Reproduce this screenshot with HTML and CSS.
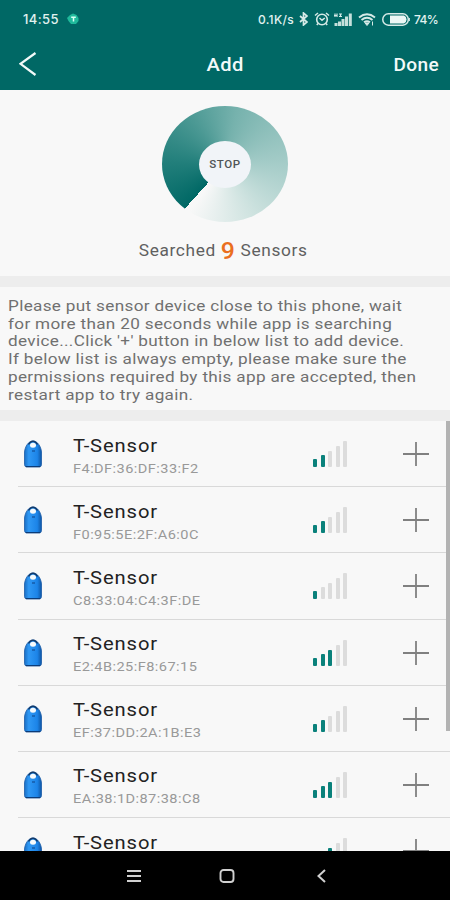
FILE: index.html
```html
<!DOCTYPE html>
<html lang="en">
<head>
    <meta charset="UTF-8">
    <meta name="viewport" content="width=device-width, initial-scale=1.0">
    <title>Add</title>
    <link rel="stylesheet" href="styles.css">
</head>
<body>
    <!-- Shared icons -->
    <svg class="icon-defs" aria-hidden="true">
        <defs>
            <linearGradient id="tag-fill" x1="0" y1="0" x2="1" y2="0">
                <stop offset="0" stop-color="#1a6fc4"/>
                <stop offset="0.25" stop-color="#2f98f4"/>
                <stop offset="0.75" stop-color="#1c84e8"/>
                <stop offset="1" stop-color="#0f56a4"/>
            </linearGradient>
            <symbol id="icon-tag" viewBox="0 0 20 28">
                <path d="M1.500 24.500V12C2 6.500 5.500 1 10 1S18 6.500 18.500 12V24.500Q18.500 26.800 16.500 26.800H3.500Q1.500 26.800 1.500 24.500Z" fill="url(#tag-fill)" stroke="#1a5ca8" stroke-width="0.800"/>
                <path d="M5.500 4.500Q7.500 1.200 10 1.200T14.500 4.500" fill="none" stroke="#143a68" stroke-width="1.400"/>
                <path d="M2.800 26.600H17.200" stroke="#0c3c78" stroke-width="1.200"/>
                <ellipse cx="10" cy="5.200" rx="3" ry="2.500" fill="#f6fafc"/>
                <path d="M9 11H12" stroke="#14529c" stroke-width="1.300"/>
            </symbol>
            <symbol id="icon-plus" viewBox="0 0 26 24">
                <path d="M0 12H26M13 0V24" stroke="#808080" stroke-width="1.800"/>
            </symbol>
        </defs>
    </svg>

    <div class="status-bar">
        <span class="status-time">14:55</span>
        <svg class="status-app" viewBox="0 0 14 12">
            <path d="M1 5L4 2 7 0.500 10.500 2 12.500 5V8L10 11H5L2.500 8Z" fill="#1fb99b"/>
            <path d="M5.200 4.300H9.800M7.500 4.300V8.500" stroke="#d9fff5" stroke-width="1.500"/>
        </svg>
        <span class="status-speed">0.1K/s</span>
        <svg class="status-bluetooth" viewBox="0 0 9 14">
            <path d="M1 4L8 10 4.500 13V1L8 4 1 10" fill="none" stroke="#d5eae7" stroke-width="1.700"/>
        </svg>
        <svg class="status-alarm" viewBox="0 0 16 14">
            <circle cx="8" cy="7.500" r="5.300" fill="none" stroke="#d5eae7" stroke-width="1.600"/>
            <path d="M1 3.500L4 1M15 3.500L12 1M5.500 6L8 8.200 10.800 6M4 11.500L2.800 13M12 11.500L13.200 13" fill="none" stroke="#d5eae7" stroke-width="1.500"/>
        </svg>
        <svg class="status-signal" viewBox="0 0 18 13">
            <path d="M1 0.500V4M0 2.500H3M3 0.500V4M5 1H8M5 3.500H8M6.500 1V4" fill="none" stroke="#d5eae7" stroke-width="1.200"/>
            <path d="M2 13V10M5.500 13V8.500M9 13V6M12.500 13V3.500M16.300 13V0.500" stroke="#c5e0dc" stroke-width="3"/>
        </svg>
        <svg class="status-wifi" viewBox="0 0 18 13">
            <path d="M1 4.500Q9 -2 17 4.500M3.500 7Q9 2.500 14.500 7M6 9.300Q9 7 12 9.300" fill="none" stroke="#d5eae7" stroke-width="1.900"/>
            <path d="M7 10H11L9 12.500ZM14.500 8.500V12.500" fill="#d5eae7" stroke="#d5eae7" stroke-width="1"/>
        </svg>
        <svg class="status-battery" viewBox="0 0 28 13">
            <rect x="0.800" y="0.800" width="25.500" height="11.400" rx="5.500" fill="none" stroke="#d5eae7" stroke-width="1.500"/>
            <path d="M8 2.500H22Q24.500 3.500 24.500 6.500T22 10.500H8Z" fill="#ecf7f5"/>
            <path d="M27.300 5V8" stroke="#d5eae7" stroke-width="1.200"/>
        </svg>
        <span class="status-percent">74%</span>
    </div>

    <div class="header">
        <svg class="back-btn" viewBox="0 0 18 24">
            <path d="M16.500 1L1.500 11.800 16.500 23" fill="none" stroke="#f2faf9" stroke-width="2.200"/>
        </svg>
        <h1>Add</h1>
        <span class="done-btn">Done</span>
    </div>

    <div class="search-panel">
        <div class="radar">
            <div class="stop-btn"><span>STOP</span></div>
        </div>
        <p class="search-result">Searched <span class="count">9</span> Sensors</p>
    </div>

    <div class="hint">
        <p>Please put sensor device close to this phone, wait<br>
        for more than 20 seconds while app is searching<br>
        device...Click '+' button in below list to add device.<br>
        If below list is always empty, please make sure the<br>
        permissions required by this app are accepted, then<br>
        restart app to try again.</p>
    </div>

    <div class="sensor-list">
        <div class="sensor">
            <svg class="tag"><use href="#icon-tag"/></svg>
            <div class="sensor-info"><h3>T-Sensor</h3><p>F4:DF:36:DF:33:F2</p></div>
            <div class="signal level-2"><i></i><i></i><i></i><i></i><i></i></div>
            <svg class="plus"><use href="#icon-plus"/></svg>
        </div>
        <div class="sensor">
            <svg class="tag"><use href="#icon-tag"/></svg>
            <div class="sensor-info"><h3>T-Sensor</h3><p>F0:95:5E:2F:A6:0C</p></div>
            <div class="signal level-2"><i></i><i></i><i></i><i></i><i></i></div>
            <svg class="plus"><use href="#icon-plus"/></svg>
        </div>
        <div class="sensor">
            <svg class="tag"><use href="#icon-tag"/></svg>
            <div class="sensor-info"><h3>T-Sensor</h3><p>C8:33:04:C4:3F:DE</p></div>
            <div class="signal level-1"><i></i><i></i><i></i><i></i><i></i></div>
            <svg class="plus"><use href="#icon-plus"/></svg>
        </div>
        <div class="sensor">
            <svg class="tag"><use href="#icon-tag"/></svg>
            <div class="sensor-info"><h3>T-Sensor</h3><p>E2:4B:25:F8:67:15</p></div>
            <div class="signal level-3"><i></i><i></i><i></i><i></i><i></i></div>
            <svg class="plus"><use href="#icon-plus"/></svg>
        </div>
        <div class="sensor">
            <svg class="tag"><use href="#icon-tag"/></svg>
            <div class="sensor-info"><h3>T-Sensor</h3><p>EF:37:DD:2A:1B:E3</p></div>
            <div class="signal level-2"><i></i><i></i><i></i><i></i><i></i></div>
            <svg class="plus"><use href="#icon-plus"/></svg>
        </div>
        <div class="sensor">
            <svg class="tag"><use href="#icon-tag"/></svg>
            <div class="sensor-info"><h3>T-Sensor</h3><p>EA:38:1D:87:38:C8</p></div>
            <div class="signal level-3"><i></i><i></i><i></i><i></i><i></i></div>
            <svg class="plus"><use href="#icon-plus"/></svg>
        </div>
        <div class="sensor">
            <svg class="tag"><use href="#icon-tag"/></svg>
            <div class="sensor-info"><h3>T-Sensor</h3></div>
            <div class="signal level-3"><i></i><i></i><i></i><i></i><i></i></div>
            <svg class="plus"><use href="#icon-plus"/></svg>
        </div>
        <div class="scrollbar"></div>
    </div>

    <div class="nav-bar">
        <svg class="nav-menu" viewBox="0 0 14 14">
            <path d="M0 2H14M0 7H14M0 12H14" stroke="#d0d0d0" stroke-width="2"/>
        </svg>
        <svg class="nav-home" viewBox="0 0 16 14">
            <rect x="1.500" y="1" width="13" height="12" rx="3" fill="none" stroke="#d0d0d0" stroke-width="1.900"/>
        </svg>
        <svg class="nav-back" viewBox="0 0 9 14">
            <path d="M8 1L1.500 7 8 13" fill="none" stroke="#d0d0d0" stroke-width="2"/>
        </svg>
    </div>
</body>
</html>
```
FILE: styles.css
```css
/* Reset CSS */
* {
    margin: 0;
    padding: 0;
    box-sizing: border-box;
}

body {
    width: 450px;
    height: 900px;
    display: flex;
    flex-direction: column;
    overflow: hidden;
    background: #f8f8f8;
    font-family: Roboto, "Liberation Sans", sans-serif;
}

svg {
    display: block;
    flex-shrink: 0;
}

.icon-defs {
    position: absolute;
    width: 0;
    height: 0;
}

/* Status bar */
.status-bar {
    height: 38px;
    flex-shrink: 0;
    display: flex;
    align-items: center;
    padding: 0 0 0 23px;
    background: #006865;
    color: #e0f2f0;
    font-family: Inter, sans-serif;
    font-size: 12px;
    font-weight: 500;
    white-space: nowrap;
}

.status-time {
    width: 36px;
    font-size: 13px;
    letter-spacing: 0.4px;
}

.status-app {
    width: 14px;
    height: 12px;
    margin-left: 7px;
}

.status-speed {
    width: 38px;
    margin-left: 178px;
    letter-spacing: 0.3px;
}

.status-bluetooth {
    width: 9px;
    height: 14px;
    margin-left: 3px;
}

.status-alarm {
    width: 16px;
    height: 14px;
    margin-left: 6px;
}

.status-signal {
    width: 18px;
    height: 13px;
    margin-left: 4px;
}

.status-wifi {
    width: 18px;
    height: 13px;
    margin-left: 6px;
}

.status-battery {
    width: 28px;
    height: 13px;
    margin-left: 6px;
}

.status-percent {
    margin-left: 4px;
    letter-spacing: -0.7px;
}

/* Header */
.header {
    height: 52px;
    flex-shrink: 0;
    display: grid;
    grid-template-columns: 1fr auto 1fr;
    align-items: center;
    padding: 0 11px 0 19px;
    background: #006865;
    color: #f2faf9;
}

.header h1,
.done-btn {
    font-size: 18px;
    font-weight: 500;
    letter-spacing: 0.4px;
}

.header h1 {
    transform: translateX(-3.500px) scaleX(1.12);
}

.back-btn {
    width: 18px;
    height: 24px;
}

.done-btn {
    justify-self: end;
    transform: scaleX(1.060);
    transform-origin: right;
}

/* Search panel */
.search-panel {
    height: 186px;
    flex-shrink: 0;
    padding-top: 16px;
    display: flex;
    flex-direction: column;
    align-items: center;
}

.radar {
    width: 126px;
    height: 116px;
    display: flex;
    align-items: center;
    justify-content: center;
    border-radius: 50%;
    background: conic-gradient(from 222deg, #006865, #227f7b 50deg, #4a9893 100deg, #76b2ad 150deg, #a3cbc7 225deg, #cfe3e0 290deg, #f8f8f8 355deg);
}

.stop-btn {
    width: 52px;
    height: 47px;
    display: flex;
    align-items: center;
    justify-content: center;
    border-radius: 50%;
    background: #f1f4f8;
    color: #505456;
    font-size: 11px;
    font-weight: 500;
    letter-spacing: 0.5px;
}

.stop-btn span {
    transform: scaleX(1.050);
}

.search-result {
    height: 30px;
    margin-top: 14px;
    line-height: 30px;
    font-size: 16px;
    letter-spacing: 0.6px;
    color: #606060;
    white-space: nowrap;
    transform: translateX(-2px) scaleX(1.080);
}

.count {
    color: #ea6f20;
    font-size: 23px;
    font-weight: 500;
    vertical-align: -3px;
    line-height: 20px;
}

/* Hint */
.hint {
    height: 145px;
    flex-shrink: 0;
    padding: 11px 0 0 8px;
    border-top: 11px solid #ededed;
    border-bottom: 11px solid #ededed;
    color: #707070;
    font-size: 15.500px;
    letter-spacing: 0.3px;
    line-height: 17.700px;
    white-space: nowrap;
}

.hint p {
    width: 390px;
    transform: scaleX(1.105);
    transform-origin: left;
}

/* Sensor list */
.sensor-list {
    position: relative;
    flex: 1;
    min-height: 0;
    overflow: hidden;
}

.sensor {
    height: 66.200px;
    margin-left: 18px;
    display: flex;
    border-bottom: 1px solid #d9d9d9;
}

.tag {
    width: 20px;
    height: 28px;
    margin: 19px 0 0 5px;
}

.sensor-info {
    width: 240px;
    margin-left: 30px;
    padding-top: 11.500px;
}

.sensor-info h3,
.sensor-info p {
    width: 200px;
    transform: scaleX(1.120);
    transform-origin: left;
}

.sensor-info h3 {
    font-size: 18px;
    line-height: 25px;
    font-weight: 400;
    letter-spacing: 0.8px;
    color: #222;
}

.sensor-info p {
    font-size: 13px;
    line-height: 21px;
    letter-spacing: 0.4px;
    color: #999;
}

.signal {
    width: 34px;
    height: 26px;
    margin-top: 20px;
    display: flex;
    align-items: flex-end;
    justify-content: space-between;
}

.signal i {
    width: 4px;
    height: 8px;
    border-radius: 1px;
    background: #dcdcdc;
}

.signal i:nth-child(2) {
    height: 12px;
}

.signal i:nth-child(3) {
    height: 16px;
}

.signal i:nth-child(4) {
    height: 21px;
}

.signal i:nth-child(5) {
    height: 26px;
}

.level-1 i:nth-child(-n+1),
.level-2 i:nth-child(-n+2),
.level-3 i:nth-child(-n+3) {
    background: #0a817b;
}

.plus {
    width: 26px;
    height: 24px;
    margin: 21px 0 0 56px;
}

.scrollbar {
    position: absolute;
    top: 0;
    right: 0;
    width: 4px;
    height: 310px;
    background: #b3b3b3;
}

/* Navigation bar */
.nav-bar {
    height: 49px;
    flex-shrink: 0;
    display: flex;
    align-items: center;
    padding-left: 127px;
    background: #000;
}

.nav-menu {
    width: 14px;
    height: 14px;
}

.nav-home {
    width: 16px;
    height: 14px;
    margin-left: 78px;
}

.nav-back {
    width: 9px;
    height: 14px;
    margin-left: 82px;
}
```
